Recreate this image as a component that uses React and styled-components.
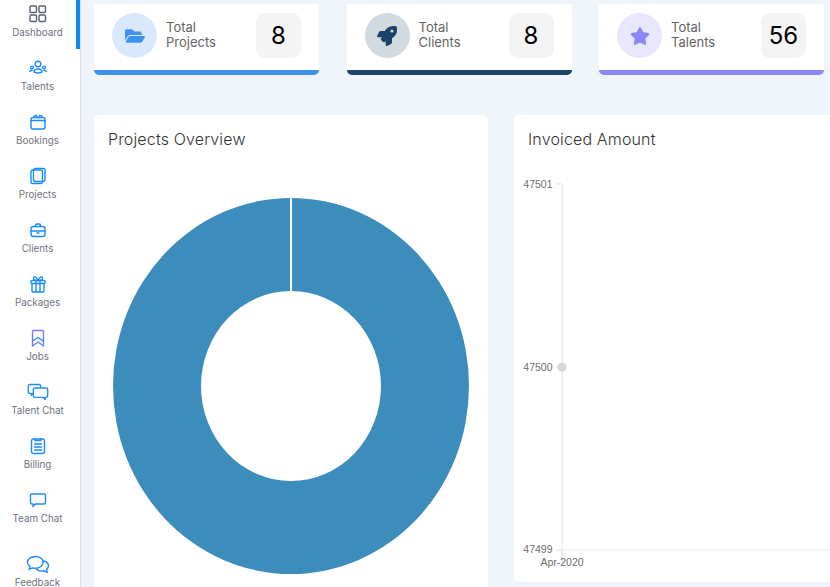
import styled, { createGlobalStyle } from "styled-components";
import { FaFolderOpen, FaRocket, FaStar } from "react-icons/fa";

const GlobalStyle = createGlobalStyle`
  html, body {
    margin: 0;
    padding: 0;
    height: 100%;
    overflow: hidden;
    background: #f0f5fc;
    font-family: Inter, "Liberation Sans", sans-serif;
  }
  * {
    box-sizing: border-box;
  }
`;

const Page = styled.div`
  display: flex;
  width: 830px;
  height: 587px;
  overflow: hidden;
`;

const Sidebar = styled.nav`
  flex: 0 0 81px;
  height: 587px;
  background: #fff;
  border-right: 1px solid #d6deeb;
  display: flex;
  flex-direction: column;
`;

const NavItem = styled.div`
  flex: none;
  height: ${({ $tall }) => ($tall ? "66px" : "54px")};
  padding: ${({ $tall }) => ($tall ? "15px" : "5px")} 1px 0 0;
  display: flex;
  flex-direction: column;
  align-items: center;
  gap: ${({ $tall }) => ($tall ? "2px" : "4px")};
  font-size: 9.8px;
  line-height: 12px;
  color: #6f7280;
  border-right: 4px solid ${({ $active }) => ($active ? "#0a8cf0" : "transparent")};
  border-image: ${({ $active }) =>
    $active ? "linear-gradient(#0a8cf0 48px, transparent 48px) 1" : "none"};

  svg {
    display: block;
    width: ${({ $tall }) => ($tall ? "24px" : "18px")};
    height: ${({ $tall }) => ($tall ? "20px" : "18px")};
    fill: none;
    stroke: ${({ $active }) => ($active ? "#5a5f76" : "#1a8cff")};
    stroke-width: 1.4;
    stroke-linejoin: round;
    stroke-linecap: round;
  }
`;

const Main = styled.main`
  flex: 1;
  min-width: 0;
  padding: 4px 0 0 13px;
  display: flex;
  flex-direction: column;
  gap: 40px;
`;

const StatRow = styled.section`
  display: grid;
  grid-template-columns: repeat(3, 225px);
  column-gap: 27.5px;
`;

const StatCard = styled.div`
  height: 71px;
  padding: 9px 18px 0;
  background: #fff;
  border-bottom: 5px solid ${({ $color }) => $color};
  border-radius: 0 0 5px 5px;
  display: flex;
  align-items: flex-start;
`;

const StatIcon = styled.div`
  width: 45px;
  height: 45px;
  flex: none;
  border-radius: 50%;
  background: ${({ $bg }) => $bg};
  color: ${({ $color }) => $color};
  display: flex;
  align-items: center;
  justify-content: center;
  font-size: 20px;
`;

const StatLabel = styled.div`
  flex: 1;
  margin: 7px 0 0 9px;
  font-size: 13px;
  line-height: 15px;
  color: #636363;
`;

const StatValue = styled.div`
  width: 45px;
  height: 45px;
  flex: none;
  border-radius: 9px;
  background: #f4f4f4;
  color: #000;
  font-size: 24px;
  display: flex;
  align-items: center;
  justify-content: center;
`;

const ChartRow = styled.section`
  display: flex;
  gap: 26px;
  align-items: flex-start;
`;

const Panel = styled.div`
  flex: none;
  width: ${({ $width }) => $width}px;
  height: ${({ $height }) => $height}px;
  background: #fff;
  border-radius: 5px;
  padding: 14px 14px 0;
`;

const PanelTitle = styled.h3`
  margin: 0;
  font-size: 16px;
  line-height: 20px;
  font-weight: 300;
  color: #333;
  letter-spacing: 0.15px;
`;

const DonutSvg = styled.svg`
  display: block;
  width: 358px;
  height: 400px;
  margin: 29px 0 0 4px;
`;

const LineSvg = styled.svg`
  display: block;
  margin: 20px 0 0 -14px;
  width: 316px;
  height: 425px;

  text {
    font-family: "Liberation Sans", Arial, sans-serif;
    font-size: 10.5px;
    fill: #6e6e6e;
  }
`;

const icons = {
  dashboard: (
    <>
      <rect x="1" y="1" width="6.5" height="6.5" rx="1.2" />
      <rect x="10" y="1" width="6.5" height="6.5" rx="1.2" />
      <rect x="1" y="10" width="6.5" height="6.5" rx="1.2" />
      <rect x="10" y="10" width="6.5" height="6.5" rx="1.2" />
    </>
  ),
  talents: (
    <>
      <circle cx="9" cy="5" r="2.800" />
      <circle cx="3" cy="8.500" r="1.400" />
      <circle cx="15" cy="8.500" r="1.400" />
      <path d="M5 13c0-2 1.800-3 4-3s4 1 4 3c-2.500 1.200-5.500 1.200-8 0z" />
      <path d="M.8 12.500c.3-.9 1-1.300 2.400-1.300M17.200 12.500c-.3-.9-1-1.300-2.400-1.300" />
    </>
  ),
  bookings: (
    <>
      <rect x="2" y="4.500" width="14" height="11.500" rx="2" />
      <path d="M2 7.500h14M5 4.500c0-2.700 3-2.700 3 0M10 4.500c0-2.700 3-2.700 3 0" />
    </>
  ),
  projects: (
    <>
      <rect x="4.500" y="1.500" width="11.500" height="13" rx="2" />
      <rect x="2" y="3" width="11.500" height="13.500" rx="2" />
    </>
  ),
  clients: (
    <>
      <rect x="2" y="5.500" width="14" height="10" rx="2.500" />
      <path d="M6.500 5.500V4.500c0-1 .8-1.500 1.500-1.500h2c.7 0 1.500.5 1.500 1.500v1M2 10h14M8 12h2" />
    </>
  ),
  packages: (
    <>
      <rect x="2" y="5.500" width="14" height="3" rx="1" />
      <path d="M3 8.500V16c0 .6.400 1 1 1h10c.6 0 1-.4 1-1V8.500M7 5.500V17M11 5.500V17" />
      <path d="M9 5.500C7 1 4.500 1 4.500 3.200c0 1.500 2 2.300 4.500 2.300zM9 5.500C11 1 13.500 1 13.500 3.200c0 1.500-2 2.300-4.500 2.300z" />
    </>
  ),
  jobs: (
    <>
      <path d="M3.500 2.500c0-.6.400-1 1-1h9c.6 0 1 .4 1 1v14.500L9 13l-5.500 4z" stroke="#7a7cf5" />
      <path d="M3.500 12L9 8.500l5.500 3.500" />
    </>
  ),
  billing: (
    <>
      <rect x="2.500" y="2" width="13" height="14.500" rx="2" />
      <path d="M6 2v1.500h6V2M5.500 7h7M5.500 10h7M5.500 13h7" />
    </>
  ),
  teamChat: (
    <path d="M3 3h12c.9 0 1.500.6 1.500 1.500v7c0 .9-.6 1.500-1.500 1.500H6.500l-2.500 2.500V13H3c-.9 0-1.500-.6-1.500-1.500v-7C1.500 3.600 2.100 3 3 3z" />
  ),
};

const topItems = [
  { label: "Dashboard", icon: icons.dashboard, active: true },
  { label: "Talents", icon: icons.talents },
  { label: "Bookings", icon: icons.bookings },
  { label: "Projects", icon: icons.projects },
  { label: "Clients", icon: icons.clients },
  { label: "Packages", icon: icons.packages },
  { label: "Jobs", icon: icons.jobs },
];

const bottomItems = [
  { label: "Billing", icon: icons.billing },
  { label: "Team Chat", icon: icons.teamChat },
];

const stats = [
  { top: "Total", bottom: "Projects", value: 8, color: "#3e91ec", bg: "#d9e9fb", Icon: FaFolderOpen },
  { top: "Total", bottom: "Clients", value: 8, color: "#1b4268", bg: "#d1d9e1", Icon: FaRocket },
  { top: "Total", bottom: "Talents", value: 56, color: "#8b87f8", bg: "#e8e7fe", Icon: FaStar },
];

function TalentChatIcon() {
  return (
    <svg viewBox="0 0 22 18" style={{ width: 22 }}>
      <path d="M3 1.500h9c1 0 1.700.7 1.700 1.700v5.500c0 1-.7 1.700-1.700 1.700H6l-1.800 2v-2H3c-1 0-1.700-.7-1.700-1.700V3.200c0-1 .7-1.700 1.700-1.700z" />
      <path d="M8 5h11c1 0 1.700.7 1.700 1.700v6c0 1-.7 1.700-1.700 1.700h-.8v2l-2-2H8c-1 0-1.700-.7-1.700-1.700v-6C6.300 5.700 7 5 8 5z" fill="#fff" />
    </svg>
  );
}

function FeedbackIcon() {
  return (
    <svg viewBox="0 0 24 20" strokeWidth="2">
      <path d="M9.500 1.500c-4.400 0-8 2.500-8 5.700 0 1.700 1 3.100 2.500 4.200l-1 3 3.500-1.600c1 .3 2 .4 3 .4 4.400 0 7.500-2.600 7.500-6S13.900 1.500 9.500 1.500z" />
      <path d="M17.500 6c3 .6 5 2.500 5 4.800 0 1.500-.8 2.700-2 3.600l.8 3-3.300-1.600c-3 .7-6.200-.1-7.800-2" />
    </svg>
  );
}

function NavEntry({ item }) {
  return (
    <NavItem $active={item.active}>
      <svg viewBox="0 0 18 18">{item.icon}</svg>
      {item.label}
    </NavItem>
  );
}

function App() {
  return (
    <Page>
      <GlobalStyle />
      <Sidebar>
        {topItems.map((item) => (
          <NavEntry key={item.label} item={item} />
        ))}
        <NavItem>
          <TalentChatIcon />
          Talent Chat
        </NavItem>
        {bottomItems.map((item) => (
          <NavEntry key={item.label} item={item} />
        ))}
        <NavItem $tall>
          <FeedbackIcon />
          Feedback
        </NavItem>
      </Sidebar>
      <Main>
        <StatRow>
          {stats.map(({ top, bottom, value, color, bg, Icon }) => (
            <StatCard key={bottom} $color={color}>
              <StatIcon $bg={bg} $color={color}>
                <Icon />
              </StatIcon>
              <StatLabel>
                {top}
                <br />
                {bottom}
              </StatLabel>
              <StatValue>{value}</StatValue>
            </StatCard>
          ))}
        </StatRow>
        <ChartRow>
          <Panel $width={394} $height={500}>
            <PanelTitle>Projects Overview</PanelTitle>
            <DonutSvg viewBox="0 0 358 400">
              <path
                fillRule="evenodd"
                fill="#3d8dbc"
                d="M1 208a178 188 0 1 0 356 0a178 188 0 1 0 -356 0zM89 208a90 95 0 1 0 180 0a90 95 0 1 0 -180 0z"
              />
              <path d="M179 18V114" stroke="#fff" strokeWidth="2" />
            </DonutSvg>
          </Panel>
          <Panel $width={330} $height={467}>
            <PanelTitle>Invoiced Amount</PanelTitle>
            <LineSvg viewBox="0 0 316 425">
              <path d="M48 15V393M42 15h6M42 198h6M42 381h6" stroke="#ececec" strokeWidth="1.500" fill="none" />
              <path d="M42 381H316" stroke="#ececec" strokeWidth="1" fill="none" />
              <circle cx="48" cy="198" r="4.500" fill="#d6d6de" />
              <text x="38.500" y="19" textAnchor="end">47501</text>
              <text x="38.500" y="202" textAnchor="end">47500</text>
              <text x="38.500" y="384" textAnchor="end">47499</text>
              <text x="48" y="397" textAnchor="middle">Apr-2020</text>
            </LineSvg>
          </Panel>
        </ChartRow>
      </Main>
    </Page>
  );
}

export default App;
